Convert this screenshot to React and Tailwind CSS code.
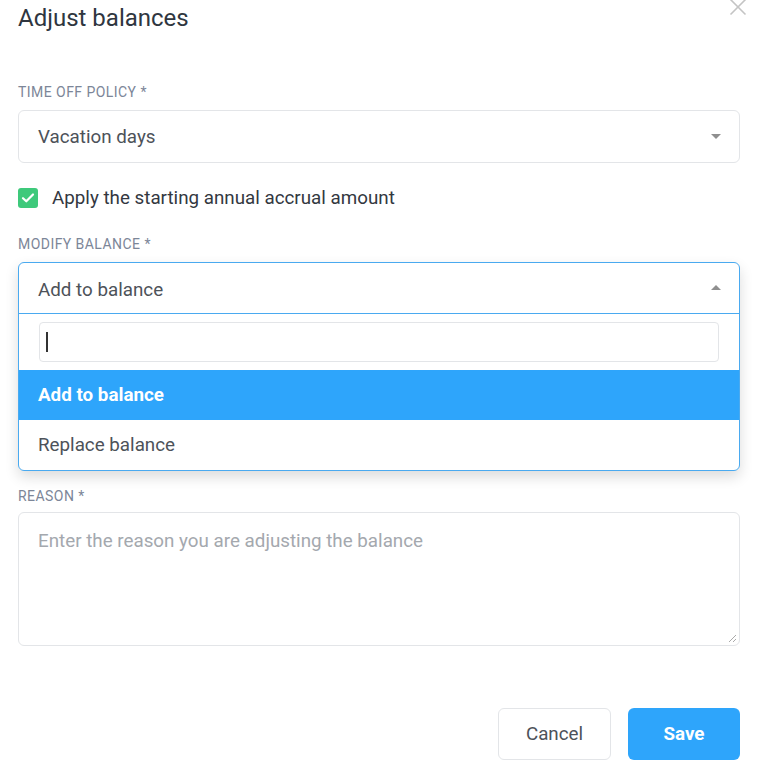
import React from "react";

export default function App() {
  return (
    <div className="relative w-[758px] h-[776px] bg-white overflow-hidden" style={{ fontFamily: "Roboto, 'Liberation Sans', sans-serif" }}>
      <div className="absolute left-[729px] top-[-2px]">
        <svg width="18" height="18" viewBox="0 0 18 18">
          <path d="M1.5 1.5 L16.5 16.5 M16.5 1.5 L1.5 16.5" stroke="#c4c4c4" strokeWidth="1.6" fill="none" />
        </svg>
      </div>
      <div className="px-[18px] pr-[18px]">
        <h1 className="pt-[3px] text-[24px] leading-[30px] text-[#2f3640] font-normal">Adjust balances</h1>

        <div className="mt-[51px] text-[14px] leading-[16px] text-[#7c8698] tracking-[0.45px]">TIME OFF POLICY *</div>
        <div className="mt-[10px] h-[53px] border border-[#e3e5e8] rounded-[6px] flex items-center justify-between pl-[19px] pr-[18px]">
          <span className="text-[18.8px] text-[#4d5259] pt-[2px]">Vacation days</span>
          <svg width="10" height="6" viewBox="0 0 10 6"><path d="M0 0 L10 0 L5 5 Z" fill="#8f8f8f" /></svg>
        </div>

        <div className="mt-[21px] flex items-center gap-[14px]">
          <div className="w-[20px] h-[20px] rounded-[3px] bg-[#3ec97b] flex items-center justify-center">
            <svg width="14" height="12" viewBox="0 0 14 12"><path d="M2 6.2 L5.3 9.3 L12 2.5" stroke="white" strokeWidth="2.2" fill="none" strokeLinecap="round" strokeLinejoin="round" /></svg>
          </div>
          <span className="text-[18.8px] text-[#33383f]">Apply the starting annual accrual amount</span>
        </div>

        <div className="mt-[24px] text-[14px] leading-[16px] text-[#7c8698] tracking-[0.45px]">MODIFY BALANCE *</div>
        <div className="relative mt-[10px] h-[53px]">
          <div className="absolute left-0 right-0 top-0 z-10 bg-white border border-[#4aaaf0] rounded-[6px] shadow-[0_6px_14px_rgba(0,0,0,0.14)]">
            <div className="h-[51px] flex items-center justify-between pl-[19px] pr-[18px] border-b border-[#4aaaf0]">
              <span className="text-[18.8px] text-[#4d5259] pt-[3px]">Add to balance</span>
              <svg width="10" height="6" viewBox="0 0 10 6"><path d="M0 5 L10 5 L5 0 Z" fill="#8f8f8f" /></svg>
            </div>
            <div className="px-[20px] pt-[8px] pb-[8px]">
              <div className="h-[40px] border border-[#e3e5e8] rounded-[4px] flex items-center pl-[6px]">
                <div className="w-[1.5px] h-[20px] bg-[#333]" />
              </div>
            </div>
            <div className="h-[50px] bg-[#2ea5fb] flex items-center pl-[19px]">
              <span className="text-[18.8px] font-bold text-white">Add to balance</span>
            </div>
            <div className="h-[50px] flex items-center pl-[19px]">
              <span className="text-[18.8px] text-[#4d5259]">Replace balance</span>
            </div>
          </div>
        </div>

        <div className="mt-[173px] text-[14px] leading-[16px] text-[#7c8698] tracking-[0.45px]">REASON *</div>
        <div className="relative mt-[8px] h-[134px] border border-[#e3e5e8] rounded-[6px] pl-[19px] pt-[14px]">
          <span className="text-[18.8px] text-[#a4a8ae]">Enter the reason you are adjusting the balance</span>
          <svg className="absolute right-[2px] bottom-[2px]" width="10" height="10" viewBox="0 0 10 10">
            <path d="M9 2 L2 9 M9 6 L6 9" stroke="#aaa" strokeWidth="1" />
          </svg>
        </div>

        <div className="mt-[62px] flex justify-end gap-[17px]">
          <button className="w-[113px] h-[52px] border border-[#e3e5e8] rounded-[6px] bg-white text-[18.8px] text-[#4d5259]">Cancel</button>
          <button className="w-[112px] h-[52px] rounded-[6px] bg-[#2ea5fb] text-[18.8px] font-bold text-white">Save</button>
        </div>
      </div>
    </div>
  );
}
